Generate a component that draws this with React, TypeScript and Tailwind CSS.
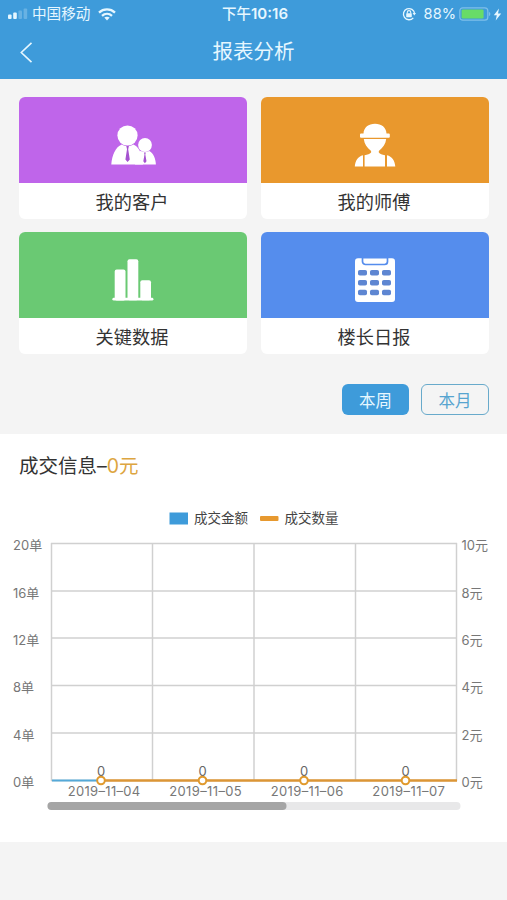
import type { ReactNode } from 'react'

const FONT = "font-['Inter','Noto_Sans_CJK_SC',sans-serif]"

function StatusBar() {
  return (
    <div className="flex h-7 items-center justify-between pl-2 pr-[5px] text-[#e6f7ff]">
      <div className="flex w-40 items-center">
        <svg width="20" height="12" viewBox="0 0 20 12" fill="currentColor">
          <rect x="0" y="6.5" width="3.6" height="4.5" rx="1" />
          <rect x="5.2" y="4.5" width="3.6" height="6.5" rx="1" />
          <rect x="10.4" y="2.5" width="3.6" height="8.5" rx="1" opacity=".25" />
          <rect x="15.6" y="0.5" width="3.6" height="10.5" rx="1" opacity=".25" />
        </svg>
        <span className="ml-1 text-[14.6px] leading-none">中国移动</span>
        <svg className="ml-2" width="18" height="13" viewBox="0 0 18 13" fill="none" stroke="currentColor" strokeWidth="2.3">
          <path d="M1 4.6C5.5.4 12.5.4 17 4.6" />
          <path d="M4 7.8c2.9-2.600 7.100-2.600 10 0" />
          <path d="M6.300 9.600c1.600-1.300 3.800-1.300 5.400 0L9 12.500z" fill="currentColor" stroke="none" />
        </svg>
      </div>
      <div className="whitespace-nowrap text-[14.5px] font-medium leading-none">
        下午<span className="text-[15px] font-semibold">10:16</span>
      </div>
      <div className="flex w-40 items-center justify-end">
        <svg width="14" height="14" viewBox="0 0 14 14" fill="none" stroke="currentColor">
          <path d="M11.300 10.800A5.600 5.600 0 1 1 12.600 6.500" strokeWidth="1.300" />
          <path d="M10.600 6h3.400l-1.700 2.500z" fill="currentColor" stroke="none" />
          <rect x="4.200" y="6.200" width="5.600" height="4" rx=".6" fill="currentColor" stroke="none" />
          <path d="M5.300 6.500V5.300a1.700 1.700 0 0 1 3.400 0v1.200" strokeWidth="1.100" />
        </svg>
        <span className="ml-2 text-[14.6px] leading-none">88%</span>
        <svg className="ml-[3px]" width="32" height="14" viewBox="0 0 32 14">
          <rect x=".8" y=".8" width="28" height="12.400" rx="3" fill="none" stroke="#7fc0ea" strokeWidth="1.200" />
          <rect x="2.600" y="2.500" width="22" height="9" rx="1.300" fill="#68dc68" />
          <path d="M29.900 4.800c2 .8 2 3.600 0 4.400z" fill="#7fc0ea" />
        </svg>
        <svg className="ml-0.5" width="9" height="13" viewBox="0 0 9 13" fill="currentColor">
          <path d="M6 .5.8 7.300h3L2.700 12.500 8.200 5.500H5z" />
        </svg>
      </div>
    </div>
  )
}

function CustomersIcon() {
  return (
    <svg width="46" height="40" viewBox="0 0 46 40" fill="#fff">
      <circle cx="17.500" cy="10.500" r="10.100" />
      <path d="M1.300 39.500C2 30 5.500 22 11.800 19.500c3.500 2.200 8 2.200 11.500 0 2.700 1.200 4.700 3.200 6.200 5.800l3.500 14.200z" />
      <circle cx="35" cy="20" r="6.900" />
      <path d="M25 25.500c2.500.8 4 .8 5.800.4 2.500 1.500 6 1.500 8.500 0 4.300 2.300 6.300 7.500 6.600 13.600H25z" />
      <path d="M16.300 21h2.600l-.7 3.200 1.600 10.300-2.200 2.600-2.200-2.600 1.600-10.300z" fill="#a552d0" />
      <path d="M34 27.500h1.800l-.5 2 1.200 6.800-1.600 1.900-1.600-1.900 1.200-6.800z" fill="#a552d0" />
    </svg>
  )
}

function WorkerIcon() {
  return (
    <svg width="42" height="44" viewBox="0 0 42 44" fill="#fff">
      <path d="M9.500 10.500C9.800 4.500 14.500.8 21 .8s11.200 3.700 11.500 9.700h2.300q1 0 1 1v2.200q0 1-1 1H7q-1 0-1-1v-2.200q0-1 1-1z" />
      <path d="M9.800 16h22.400c-.6 5-3 8.500-7.400 12v1.500c1.200 1.600 3.200 2.300 6.200 2.800v11.200H10.600V32.300c3-.5 5.200-1.200 6.500-2.800V28c-4.400-3.500-6.700-7-7.300-12z" />
      <path d="M9 32.300v11.200H.8C1.400 37.500 4 33.500 9 32.300zM33 32.300c5 1.200 7.700 5.200 8.300 11.200H33z" />
    </svg>
  )
}

function BarsIcon() {
  return (
    <svg width="42" height="42" viewBox="0 0 42 42" fill="#fff">
      <rect x="2.700" y="10.500" width="10.800" height="31" rx="2" />
      <rect x="15.500" y=".3" width="10.800" height="41" rx="2" />
      <rect x="28.300" y="21.300" width="10.700" height="20" rx="2" />
      <rect x=".4" y="38.800" width="41" height="2.800" rx="1.400" />
    </svg>
  )
}

function ReportIcon() {
  return (
    <svg width="40" height="44" viewBox="0 0 40 44">
      <rect width="40" height="43.700" y=".3" rx="3" fill="#fff" />
      <path d="M7.500 0v3.500a3 3 0 0 0 3 3h19a3 3 0 0 0 3-3V0" fill="#fff" stroke="#558ded" strokeWidth="1.700" />
      <path d="M7 0h26" stroke="#558ded" strokeWidth="1.200" />
      {[12, 22, 31.8].map((y) =>
        [3, 15, 27].map((x) => (
          <rect key={`${x}-${y}`} x={x} y={y} width="9" height="5.500" rx="1.800" fill="#5e86d2" />
        ))
      )}
    </svg>
  )
}

function MenuCard({ label, color, icon }: { label: string; color: string; icon: ReactNode }) {
  return (
    <div className="flex h-[122px] flex-col overflow-hidden rounded-md bg-white">
      <div className={`flex h-[86px] items-center justify-center pt-2.5 ${color}`}>{icon}</div>
      <div className="flex flex-1 items-center justify-center pr-0.5 pt-0.5 text-[18.2px] leading-none text-[#333]">{label}</div>
    </div>
  )
}

const columns = [51.5, 152.5, 254, 355.5, 456.5]
const rows = [
  { y: 43.5, left: '20单', right: '10元' },
  { y: 91, left: '16单', right: '8元' },
  { y: 138, left: '12单', right: '6元' },
  { y: 185.5, left: '8单', right: '4元' },
  { y: 233, left: '4单', right: '2元' },
  { y: 280.5, left: '0单', right: '0元' },
]
const days = [
  { x: 101, date: '2019–11–04' },
  { x: 202.5, date: '2019–11–05' },
  { x: 304, date: '2019–11–06' },
  { x: 405.5, date: '2019–11–07' },
]

function DealChart() {
  return (
    <svg className="block" width="507" height="342" viewBox="0 0 507 342" fontSize="13" fill="#777">
      {/* legend */}
      <rect x="169.500" y="12.500" width="18.500" height="12" fill="#3e9bda" />
      <text x="194" y="23" fontSize="13.500" fill="#444">成交金额</text>
      <rect x="260" y="16" width="18.500" height="5" rx="1" fill="#e7992f" />
      <text x="284.500" y="23" fontSize="13.500" fill="#444">成交数量</text>

      {/* grid */}
      {rows.map((r) => (
        <g key={r.y}>
          <path d={`M51 ${r.y}H457`} stroke="#d0d0d0" strokeWidth="1.300" />
          <text x="13" y={r.y + 6.7}>{r.left}</text>
          <text x="461.500" y={r.y + 6.7}>{r.right}</text>
        </g>
      ))}
      {columns.map((x) => (
        <path key={x} d={`M${x} 43V281`} stroke="#d0d0d0" strokeWidth="1.500" />
      ))}

      {/* both series sit on zero */}
      <path d="M52 280.500H101" stroke="#55a9d8" strokeWidth="2" />
      <path d="M101 280.500H457" stroke="#dc9636" strokeWidth="2.500" />
      {days.map((d) => (
        <g key={d.date} textAnchor="middle">
          <text x={d.x} y="275.500" fill="#666">0</text>
          <circle cx={d.x} cy="280.500" r="3.800" fill="#fff" stroke="#e09a2d" strokeWidth="2" />
          <text x={d.x + 3} y="296" textLength="72.500">{d.date}</text>
        </g>
      ))}

      {/* scroll bar */}
      <rect x="47.500" y="302" width="413" height="8" rx="4" fill="#e8e8e9" />
      <rect x="47.500" y="302" width="239" height="8" rx="4" fill="#a5a5a5" />
    </svg>
  )
}

export default function App() {
  return (
    <div className={`h-[900px] w-[507px] overflow-hidden bg-[#f4f4f4] ${FONT}`}>
      <header className="h-[79px] bg-[#3e9bda]">
        <StatusBar />
        <div className="grid h-12 grid-cols-[1fr_auto_1fr] items-center text-[#e6f7ff]">
          <svg className="ml-5" width="13" height="21" viewBox="0 0 13 21" fill="none" stroke="currentColor" strokeWidth="1.600">
            <path d="M11.500.8 1.300 10.500l10.200 9.700" />
          </svg>
          <h1 className="pt-px text-[20.5px] leading-none">报表分析</h1>
        </div>
      </header>

      <div className="grid grid-cols-2 gap-x-3.5 gap-y-[13px] pl-[19px] pr-[18px] pt-[18px]">
        <MenuCard label="我的客户" color="bg-[#bf65ea]" icon={<CustomersIcon />} />
        <MenuCard label="我的师傅" color="bg-[#e9982d]" icon={<WorkerIcon />} />
        <MenuCard label="关键数据" color="bg-[#6ac973]" icon={<BarsIcon />} />
        <MenuCard label="楼长日报" color="bg-[#558ded]" icon={<ReportIcon />} />
      </div>

      <div className="flex h-20 items-center justify-end gap-3 pr-[18px] pt-[11px] text-[16.5px]">
        <button className="h-[31px] w-[67px] rounded-md bg-[#3e9bda] pt-[3px] leading-none text-[#e6f7ff]">本周</button>
        <button className="h-[31px] w-[68px] rounded-md border-[1.5px] border-[#68aacb] pt-[3px] leading-none text-[#57a4d0]">本月</button>
      </div>

      <section className="h-[408px] bg-white">
        <h2 className="flex h-[66px] items-center pl-[19px] text-[19.5px] leading-none text-[#333]">
          成交信息–<span className="text-[#dda540]">0元</span>
        </h2>
        <DealChart />
      </section>
    </div>
  )
}
